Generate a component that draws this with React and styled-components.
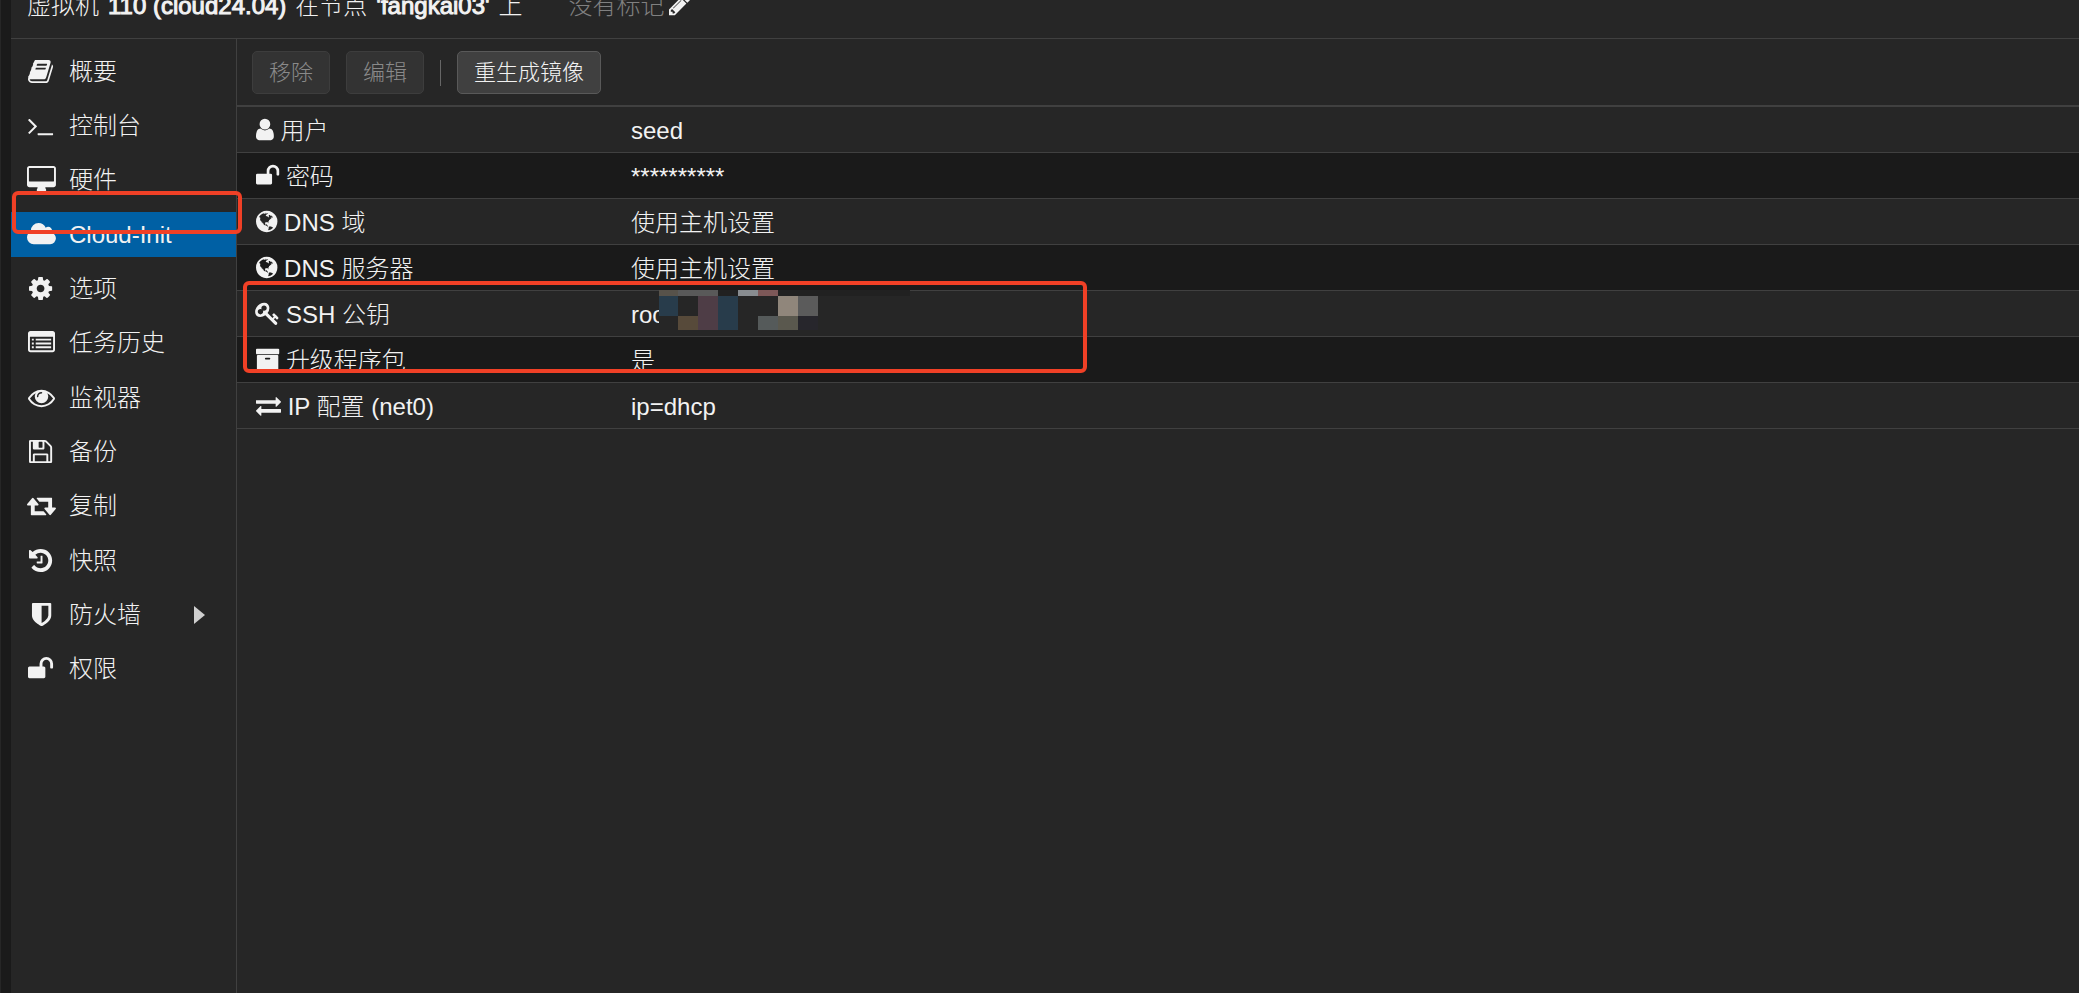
import React from 'react';
import styled, { createGlobalStyle } from 'styled-components';

const GlobalStyle = createGlobalStyle`
  * {
    box-sizing: border-box;
  }

  html,
  body,
  #root {
    height: 100%;
    margin: 0;
  }

  body {
    overflow: hidden;
    background-color: #262626;
    color: #f2f2f2;
    font-family: 'Liberation Sans', 'Noto Sans CJK SC', sans-serif;
    font-size: 24px;
    font-weight: 300;
    line-height: 36px;
  }
`;

// [left edge, advance width, path] on a 1792 unit em
const GLYPHS = {
  book: [64, 1664, 'M1703 478q40 57 18 129l-275 906q-19 64-76.5 107.5t-122.5 43.5h-923q-77 0-148.5-53.5t-99.5-131.5q-24-67-2-127 0-4 3-27t4-37q1-8-3-21.5t-3-19.5q2-11 8-21t16.5-23.5 16.5-23.5q23-38 45-91.5t30-91.5q3-10 .5-30t-.5-28q3-11 17-28t17-23q21-36 42-92t25-90q1-9-2.5-32t.5-28q4-13 22-30.5t22-22.5q19-26 42.5-84.5t27.5-96.5q1-8-3-25.5t-2-26.5q2-8 9-18t18-23 17-21q8-12 16.5-30.5t15-35 16-36 19.5-32 26.5-23.5 36-11.5 47.5 5.5l-1 3q38-9 51-9h761q74 0 114 56t18 130l-274 906q-36 119-71.5 153.5t-128.5 34.5h-869q-27 0-38 15-11 16-1 43 24 70 144 70h923q29 0 56-15.5t35-41.5l300-987q7-22 5-57 38 15 59 43zm-1064 2q-4 13 2 22.5t20 9.5h608q13 0 25.5-9.5t16.5-22.5l21-64q4-13-2-22.5t-20-9.5h-608q-13 0-25.5 9.5t-16.5 22.5zm-83 256q-4 13 2 22.5t20 9.5h608q13 0 25.5-9.5t16.5-22.5l21-64q4-13-2-22.5t-20-9.5h-608q-13 0-25.5 9.5t-16.5 22.5z'],
  terminal: [64, 1664, 'M649 983l-466 466q-10 10-23 10t-23-10l-50-50q-10-10-10-23t10-23l393-393-393-393q-10-10-10-23t10-23l50-50q10-10 23-10t23 10l466 466q10 10 10 23t-10 23zm1079 457v64q0 14-9 23t-23 9h-960q-14 0-23-9t-9-23v-64q0-14 9-23t23-9h960q14 0 23 9t9 23z'],
  desktop: [-64, 1920, 'M1728 992v-832q0-13-9.5-22.5t-22.5-9.5h-1600q-13 0-22.5 9.5t-9.5 22.5v832q0 13 9.5 22.5t22.5 9.5h1600q13 0 22.5-9.5t9.5-22.5zm128-832v1088q0 66-47 113t-113 47h-544q0 37 16 77.5t32 71 16 43.5q0 26-19 45t-45 19h-512q-26 0-45-19t-19-45q0-14 16-44t32-70 16-78h-544q-66 0-113-47t-47-113v-1088q0-66 47-113t113-47h1600q66 0 113 47t47 113z'],
  cloud: [64, 1920, 'M1984 1152q0 159-112.5 271.5t-271.5 112.5h-1088q-185 0-316.5-131.5t-131.5-316.5q0-132 71-241.5t187-163.5q-2-28-2-43 0-212 150-362t362-150q158 0 286.5 88t187.5 230q70-62 166-62 106 0 181 75t75 181q0 75-41 138 129 30 213 134.5t84 239.5z'],
  cog: [128, 1536, 'M1152 896q0-106-75-181t-181-75-181 75-75 181 75 181 181 75 181-75 75-181zm512-109v222q0 12-8 23t-20 13l-185 28q-19 54-39 91 35 50 107 138 10 12 10 25t-9 23q-27 37-99 108t-94 71q-12 0-26-9l-138-108q-44 23-91 38-16 136-29 186-7 28-36 28h-222q-14 0-24.5-8.5t-11.5-21.5l-28-184q-49-16-90-37l-141 107q-10 9-25 9-14 0-25-11-126-114-165-168-7-10-7-23 0-12 8-23 15-21 51-66.5t54-70.5q-27-50-41-99l-183-27q-13-2-21-12.5t-8-23.5v-222q0-12 8-23t19-13l186-28q14-46 39-92-40-57-107-138-10-12-10-24 0-10 9-23 26-36 98.5-107.5t94.5-71.5q13 0 26 10l138 107q44-23 91-38 16-136 29-186 7-28 36-28h222q14 0 24.5 8.5t11.5 21.5l28 184q49 16 90 37l142-107q9-9 24-9 13 0 25 10 129 119 165 170 7 8 7 22 0 12-8 23-15 21-51 66.5t-54 70.5q26 50 41 98l183 28q13 2 21 12.5t8 23.5z'],
  list: [0, 1792, 'M256 1152h128v128h-128zm0-256h128v128h-128zm0-256h128v128h-128zm256 512h1024v128h-1024zm0-256h1024v128h-1024zm0-256h1024v128h-1024zM1664 1376v-832q0-13-9.5-22.5t-22.5-9.5h-1472q-13 0-22.5 9.5t-9.5 22.5v832q0 13 9.5 22.5t22.5 9.5h1472q13 0 22.5-9.5t9.5-22.5zm128-1088v1088q0 66-47 113t-113 47h-1472q-66 0-113-47t-47-113v-1088q0-66 47-113t113-47h1472q66 0 113 47t47 113z'],
  eye: [0, 1792, 'M1664 960q-152-236-381-353 61 104 61 225 0 185-131.5 316.5t-316.5 131.5-316.5-131.5-131.5-316.5q0-121 61-225-229 117-381 353 133 205 333.5 326.5t434.5 121.5 434.5-121.5 333.5-326.5zm-720-384q0-20-14-34t-34-14q-125 0-214.5 89.5t-89.5 214.5q0 20 14 34t34 14 34-14 14-34q0-86 61-147t147-61q20 0 34-14t14-34zm848 384q0 34-20 69-140 230-376.5 368.5t-499.5 138.5-499.5-139-376.5-368q-20-35-20-69t20-69q140-229 376.5-368t499.5-139 499.5 139 376.5 368q20 35 20 69z'],
  floppy: [128, 1536, 'M512 1536h768v-384h-768v384zm896 0h128v-896q0-14-10-38.5t-20-34.5l-281-281q-10-10-34-20t-39-10v416q0 40-28 68t-68 28h-576q-40 0-68-28t-28-68v-416h-128v1280h128v-416q0-40 28-68t68-28h832q40 0 68 28t28 68v416zm-384-928v-320q0-13-9.5-22.5t-22.5-9.5h-192q-13 0-22.5 9.5t-9.5 22.5v320q0 13 9.5 22.5t22.5 9.5h192q13 0 22.5-9.5t9.5-22.5zm640 32v928q0 40-28 68t-68 28h-1344q-40 0-68-28t-28-68v-1344q0-40 28-68t68-28h928q40 0 88 20t76 48l280 280q28 28 48 76t20 88z'],
  retweet: [0, 1920, 'M1280 1504q0 13-9.5 22.5t-22.5 9.5h-960q-8 0-13.5-2t-9-7-5.5-8-3-11.5-1-11.5v-600h-192q-26 0-45-19t-19-45q0-24 15-41l320-384q19-22 49-22t49 22l320 384q15 17 15 41 0 26-19 45t-45 19h-192v384h576q16 0 25 11l160 192q7 10 7 21zm640-416q0 24-15 41l-320 384q-20 23-49 23t-49-23l-320-384q-15-17-15-41 0-26 19-45t45-19h192v-384h-576q-16 0-25-12l-160-192q-7-9-7-20 0-13 9.5-22.5t22.5-9.5h960q8 0 13.5 2t9 7 5.5 8 3 11.5 1 11.5v600h192q26 0 45 19t19 45z'],
  history: [128, 1536, 'M1664 896q0 156-61 298t-164 245-245 164-298 61q-172 0-327-72.5t-264-204.5q-7-10-6.5-22.5t8.5-20.5l137-138q10-9 25-9 16 2 23 12 73 95 179 147t225 52q104 0 198.5-40.5t163.5-109.5 109.5-163.5 40.5-198.5-40.5-198.5-109.5-163.5-163.5-109.5-198.5-40.5q-98 0-188 35.5t-160 101.5l137 138q31 30 14 69-17 40-59 40h-448q-26 0-45-19t-19-45v-448q0-42 40-59 39-17 69 14l130 129q107-101 244.5-156.5t284.5-55.5q156 0 298 61t245 164 164 245 61 298zm-640-288v448q0 14-9 23t-23 9h-320q-14 0-23-9t-9-23v-64q0-14 9-23t23-9h224v-352q0-14 9-23t23-9h64q14 0 23 9t9 23z'],
  shield: [256, 1280, 'M1408 960v-640h-448v1137q119-63 213-137 235-184 235-360zm192-768v768q0 86-33.5 170.5t-83 150-118 127.5-126.5 103-121 77.5-89.5 49.5-42.5 20q-12 6-26 6t-26-6q-16-7-42.5-20t-89.5-49.5-121-77.5-126.5-103-118-127.5-83-150-33.5-170.5v-768q0-26 19-45t45-19h1152q26 0 45 19t19 45z'],
  unlock: [64, 1664, 'M1728 576v256q0 26-19 45t-45 19h-64q-26 0-45-19t-19-45v-256q0-106-75-181t-181-75-181 75-75 181v192h96q40 0 68 28t28 68v576q0 40-28 68t-68 28h-960q-40 0-68-28t-28-68v-576q0-40 28-68t68-28h672v-192q0-185 131.5-316.5t316.5-131.5 316.5 131.5 131.5 316.5z'],
  user: [256, 1280, 'M1536 1399q0 109-62.5 187t-150.5 78h-854q-88 0-150.5-78t-62.5-187q0-85 8.5-160.5t31.5-152 58.5-131 94-89 134.5-34.5q131 128 313 128t313-128q76 0 134.5 34.5t94 89 58.5 131 31.5 152 8.5 160.5zm-256-887q0 159-112.5 271.5t-271.5 112.5-271.5-112.5-112.5-271.5 112.5-271.5 271.5-112.5 271.5 112.5 112.5 271.5z'],
  globe: [128, 1536, 'M896 128q209 0 385.5 103t279.5 279.5 103 385.5-103 385.5-279.5 279.5-385.5 103-385.5-103-279.5-279.5-103-385.5 103-385.5 279.5-279.5 385.5-103zm274 521q-2 1-9.5 9.5t-13.5 9.5q2 0 4.5-5t5-11 3.5-7q6-7 22-15 14-6 52-12 34-8 51 11-2-2 9.5-13t14.5-12q3-2 15-4.5t15-7.5l2-22q-12 1-17.5-7t-6.5-21q0 2-6 8 0-7-4.5-8t-11.5 1-9 1q-10-3-15-7.5t-8-16.5-4-15q-2-5-9.5-11t-9.5-10q-1-2-2.5-5.5t-3-6.5-4-5.5-5.5-2.5-7 5-7.5 10-4.5 5q-3-2-6-1.5t-4.5 1-4.5 3-5 3.5q-3 2-8.5 3t-8.5 2q15-5-1-11-10-4-16-3 9-4 7.5-12t-8.5-14h5q-1-4-8.5-8.5t-17.5-8.5-13-6q-8-5-34-9.5t-33-.5q-5 6-4.5 10.5t4 14 3.5 12.5q1 6-5.5 13t-6.5 12q0 7 14 15.5t10 21.5q-3 8-16 16t-16 12q-5 8-1.5 18.5t10.5 16.5q2 2 1.5 4t-3.5 4.5-5.5 4-6.5 3.5l-3 2q-11 5-20.5-6t-13.5-26q-7-25-16-30-23-8-29 1-5-13-41-26-25-9-58-4 6-1 0-15-7-15-19-12 3-6 4-17.5t1-13.5q3-13 12-23 1-1 7-8.5t9.5-13.5.5-6q35 4 50-11 5-5 11.5-17t10.5-17q9-6 14-5.5t14.5 5.5 14.5 5q14 1 15.5-11t-7.5-20q12 1 3-17-4-7-8-9-12-4-27 5-8 4 2 8-1-1-9.5 10.5t-16.5 17.5-16-5q-1-1-5.5-13.5t-9.5-13.5q-8 0-16 15 3-8-11-15t-24-8q19-12-8-27-7-4-20.5-5t-19.5 4q-5 7-5.5 11.5t5 8 10.5 5.5 11.5 4 8.5 3q14 10 8 14-2 1-8.5 3.5t-11.5 4.5-6 4q-3 4 0 14t-2 14q-5-5-9-17.5t-7-16.5q7 9-25 6l-10-1q-4 0-16 2t-20.5 1-13.5-8q-4-8 0-20 1-4 4-2-4-3-11-9.5t-10-8.5q-46 15-94 41 6 1 12-1 5-2 13-6.5t10-5.5q34-14 42-7l5-5q14 16 20 25-7-4-30-1-20 6-22 12 7 12 5 18-4-3-11.5-10t-14.5-11-15-5q-16 0-22 1-146 80-235 222 7 7 12 8 4 1 5 9t2.5 11 11.5-3q9 8 3 19 1-1 44 27 19 17 21 21 3 11-10 18-1-2-9-9t-9-4q-3 5 .5 18.5t10.5 12.5q-7 0-9.5 16t-2.5 35.5-1 23.5l2 1q-3 12 5.5 34.5t21.5 19.5q-13 3 20 43 6 8 8 9 3 2 12 7.5t15 10 10 10.5q4 5 10 22.5t14 23.5q-2 6 9.5 20t10.5 23q-1 0-2.5 1t-2.5 1q3 7 15.5 14t15.5 13q1 3 2 10t3 11 8 2q2-20-24-62-15-25-17-29-3-5-5.5-15.5t-4.5-14.5q2 0 6 1.5t8.5 3.5 7.5 4 2 3q-3 7 2 17.5t12 18.5 17 19 12 13q6 6 14 19.5t0 13.5q9 0 20 10.5t17 19.5q5 8 8 26t5 24q2 7 8.5 13.5t12.5 9.5l16 8 13 7q5 2 18.5 10.5t21.5 11.5q10 4 16 4t14.5-2.5 13.5-3.5q15-2 29 15t21 21q36 19 55 11-2 1 .5 7.5t8 15.5 9 14.5 5.5 8.5q5 6 18 15t18 15q6-4 7-9-3 8 7 20t18 10q14-3 14-32-31 15-49-18 0-1-2.5-5.5t-4-8.5-2.5-8.5 0-7.5 5-3q9 0 10-3.5t-2-12.5-4-13q-1-8-11-20t-12-15q-5 9-16 8t-16-9q0 1-1.5 5.5t-1.5 6.5q-13 0-15-1 1-3 2.5-17.5t3.5-22.5q1-4 5.5-12t7.5-14.5 4-12.5-4.5-9.5-17.5-2.5q-19 1-26 20-1 3-3 10.5t-5 11.5-9 7q-7 3-24 2t-24-5q-13-8-22.5-29t-9.5-37q0-10 2.5-26.5t3-25-5.5-24.5q3-2 9-9.5t10-10.5q2-1 4.5-1.5t4.5 0 4-1.5 3-6q-1-1-4-3-3-3-4-3 7 3 28.5-1.5t27.5 1.5q15 11 22-2 0-1-2.5-9.5t-.5-13.5q5 27 29 9 3 3 15.5 5t17.5 5q3 2 7 5.5t5.5 4.5 5-.5 8.5-6.5q10 14 12 24 11 40 19 44 7 3 11 2t4.5-9.5 0-14-1.5-12.5l-1-8v-18l-1-8q-15-3-18.5-12t1.5-18.5 15-18.5q1-1 8-3.5t15.5-6.5 12.5-8q21-19 15-35 7 0 11-9-1 0-5-3t-7.5-5-4.5-2q9-5 2-16 5-3 7.5-11t7.5-10q9 12 21 2 7-8 1-16 5-7 20.5-10.5t18.5-9.5q7 2 8-2t1-12 3-12q4-5 15-9t13-5l17-11q3-4 0-4 18 2 31-11 10-11-6-20 3-6-3-9.5t-15-5.5q3-1 11.5-.5t10.5-1.5q15-10-7-16-17-5-43 12zm-163 877q206-36 351-189-3-3-12.5-4.5t-12.5-3.5q-18-7-24-8 1-7-2.5-13t-8-9-12.5-8-11-7q-2-2-7-6t-7-5.5-7.5-4.5-8.5-2-10 1l-3 1q-3 1-5.5 2.5t-5.5 3-4 3 0 2.5q-21-17-36-22-5-1-11-5.5t-10.5-7-10-1.5-11.5 7q-5 5-6 15t-2 13q-7-5 0-17.5t2-18.5q-3-6-10.5-4.5t-12 4.5-11.5 8.5-9 6.5-8.5 5.5-8.5 7.5q-3 4-6 12t-5 11q-2-4-11.5-6.5t-9.5-5.5q2 10 4 35t5 38q7 31-12 48-27 25-29 40-4 22 12 26 0 7-8 20.5t-7 21.5q0 6 2 16z'],
  key: [64, 1664, 'M832 512q0-80-56-136t-136-56-136 56-56 136q0 42 19 83-41-19-83-19-80 0-136 56t-56 136 56 136 136 56 136-56 56-136q0-42-19-83 41 19 83 19 80 0 136-56t56-136zm851 704q0 17-49 66t-66 49q-9 0-28.5-16t-36.5-33-38.5-40-24.5-26l-96 96 220 220q28 28 28 68 0 42-39 81t-81 39q-40 0-68-28l-671-671q-176 131-365 131-163 0-265.5-102.5t-102.5-265.5q0-160 95-313t248-248 313-95q163 0 265.5 102.5t102.5 265.5q0 189-131 365l355 355 96-96q-3-3-26-24.5t-40-38.5-33-36.5-16-28.5q0-17 49-66t66-49q13 0 23 10 6 6 46 44.5t82 79.5 86.5 86 73 78 28.5 41z'],
  archive: [64, 1664, 'M1088 832q0-26-19-45t-45-19h-256q-26 0-45 19t-19 45 19 45 45 19h256q26 0 45-19t19-45zm576-192v960q0 26-19 45t-45 19h-1408q-26 0-45-19t-19-45v-960q0-26 19-45t45-19h1408q26 0 45 19t19 45zm64-448v256q0 26-19 45t-45 19h-1536q-26 0-45-19t-19-45v-256q0-26 19-45t45-19h1536q26 0 45 19t19 45z'],
  exchange: [0, 1792, 'M1792 1184v192q0 13-9.5 22.5t-22.5 9.5h-1376v192q0 13-9.5 22.5t-22.5 9.5q-12 0-24-10l-319-320q-9-9-9-22 0-14 9-23l320-320q9-9 23-9 13 0 22.5 9.5t9.5 22.5v192h1376q13 0 22.5 9.5t9.5 22.5zm0-544q0 14-9 23l-320 320q-9 9-23 9-13 0-22.5-9.5t-9.5-22.5v-192h-1376q-13 0-22.5-9.5t-9.5-22.5v-192q0-13 9.5-22.5t22.5-9.5h1376v-192q0-14 9-23t23-9q12 0 24 10l319 319q9 9 9 23z'],
  pencil: [128, 1536, 'M491 1536l91-91-235-235-91 91v107h128v128h107zm523-928q0-22-22-22-10 0-17 7l-542 542q-7 7-7 17 0 22 22 22 10 0 17-7l542-542q7-7 7-17zm-54-192l416 416-832 832h-416v-416zm683 96q0 53-37 90l-166 166-416-416 166-165q36-38 90-38 53 0 91 38l235 234q37 39 37 91z']
};

const Svg = styled.svg`
  width: auto;
  height: ${props => props.$size}px;
  fill: currentColor;
  overflow: visible;
  vertical-align: -3px;
`;

const Icon = ({ name, size = 25 }) => {
  const [left, width, path] = GLYPHS[name];
  return (
    <Svg $size={size} viewBox={`${left} 0 ${width} 1792`} aria-hidden="true">
      <path d={path} />
    </Svg>
  );
};

const Page = styled.div`
  position: relative;
  display: flex;
  height: 100%;
`;

const Splitter = styled.div`
  flex: none;
  width: 11px;
  background-color: #1a1a1a;
  border-left: 1px solid #262626;
`;

const Main = styled.div`
  flex: 1;
  min-width: 0;
  display: flex;
  flex-direction: column;
`;

const Header = styled.header`
  flex: none;
  display: flex;
  align-items: flex-end;
  gap: 46px;
  height: 39px;
  padding: 0 16px 14px;
  border-bottom: 1px solid #404040;
`;

const Title = styled.h1`
  display: flex;
  gap: 9px;
  margin: 0;
  font-size: 24px;
  font-weight: inherit;
`;

const GuestName = styled.span`
  -webkit-text-stroke: 1px currentColor;
`;

const Tags = styled.div`
  color: #808080;
`;

const EditTags = styled.button`
  margin-left: 4px;
  padding: 0;
  border: 0;
  background: none;
  color: #f2f2f2;
  font: inherit;
`;

const Body = styled.div`
  flex: 1;
  min-height: 0;
  display: flex;
`;

const Nav = styled.nav`
  flex: none;
  width: 226px;
  padding-top: 10px;
  border-right: 1px solid #404040;
`;

const NavItem = styled.a`
  display: flex;
  align-items: center;
  height: 45px;
  margin-bottom: 9px;
  padding-left: 14px;
  color: #f2f2f2;
  background-color: ${props => (props.$active ? '#0060a4' : 'transparent')};
  text-decoration: none;

  &:nth-child(3n) {
    margin-bottom: 10px;
  }
`;

const NavIcon = styled.span`
  display: flex;
  justify-content: center;
  width: 32px;
  margin-right: 12px;
`;

const Expander = styled.span`
  margin-left: auto;
  margin-right: 31px;
  border-style: solid;
  border-width: 9px 0 9px 11px;
  border-color: transparent transparent transparent #cfcfcf;
`;

const Content = styled.main`
  flex: 1;
  min-width: 0;
`;

const Toolbar = styled.div`
  display: flex;
  align-items: center;
  gap: 16px;
  padding: 12px 15px 11px;
  border-bottom: 2px solid #404040;
`;

const Button = styled.button`
  height: 43px;
  padding: 0 16px;
  border: 1px solid #595959;
  border-radius: 5px;
  background-color: #404040;
  color: #f2f2f2;
  font-family: inherit;
  font-size: 22px;
  font-weight: inherit;
  line-height: 32px;

  &:disabled {
    border-color: #3d3d3d;
    background-color: #333333;
    color: #8a8a8a;
  }
`;

const Separator = styled.div`
  width: 1px;
  height: 26px;
  background-color: #666666;
`;

const Table = styled.table`
  width: 100%;
  border-spacing: 0;
  table-layout: fixed;
`;

const Row = styled.tr`
  height: 46px;

  &:nth-child(even) {
    background-color: #1a1a1a;
  }

  th,
  td {
    padding: 2px 19px 0;
    border-bottom: 1px solid #404040;
  }
`;

const Name = styled.th`
  width: 375px;
  font-weight: inherit;
  text-align: left;
  white-space: nowrap;
`;

const Value = styled.td`
  position: relative;
`;

const Mosaic = styled.svg`
  position: absolute;
  top: -1px;
  left: 47px;
`;

const Highlight = styled.div`
  position: absolute;
  top: ${props => props.$top}px;
  left: ${props => props.$left}px;
  width: ${props => props.$width}px;
  height: ${props => props.$height}px;
  border: 4px solid #f04026;
  border-radius: 6px;
  pointer-events: none;
`;

const NAV_ITEMS = [
  { icon: 'book', label: '概要' },
  { icon: 'terminal', label: '控制台' },
  { icon: 'desktop', label: '硬件' },
  { icon: 'cloud', label: 'Cloud-Init', active: true },
  { icon: 'cog', label: '选项' },
  { icon: 'list', label: '任务历史' },
  { icon: 'eye', label: '监视器' },
  { icon: 'floppy', label: '备份' },
  { icon: 'retweet', label: '复制' },
  { icon: 'history', label: '快照' },
  { icon: 'shield', label: '防火墙', expandable: true },
  { icon: 'unlock', label: '权限' }
];

const SETTINGS = [
  { icon: 'user', label: '用户', value: 'seed' },
  { icon: 'unlock', label: '密码', value: '**********' },
  { icon: 'globe', label: 'DNS 域', value: '使用主机设置' },
  { icon: 'globe', label: 'DNS 服务器', value: '使用主机设置' },
  { icon: 'key', label: 'SSH 公钥', value: 'roo', masked: true },
  { icon: 'archive', label: '升级程序包', value: '是' },
  { icon: 'exchange', label: 'IP 配置 (net0)', value: 'ip=dhcp' }
];

// x, y, width, height, colour
const MOSAIC_BLOCKS = [
  [0, 0, 251, 6, '#212121'],
  [0, 6, 159, 34, '#262626'],
  [0, 0, 19, 6, '#57524a'],
  [19, 0, 40, 6, '#595959'],
  [79, 0, 20, 6, '#888c90'],
  [99, 0, 20, 6, '#7d5858'],
  [0, 6, 19, 20, '#283c4b'],
  [39, 6, 20, 34, '#4e3d46'],
  [59, 6, 20, 34, '#283c4b'],
  [119, 6, 20, 20, '#90867b'],
  [139, 6, 20, 20, '#5b5b5b'],
  [19, 26, 20, 14, '#574a3a'],
  [99, 26, 20, 14, '#555a5a'],
  [119, 26, 20, 14, '#5a584e'],
  [139, 26, 20, 14, '#27262c']
];

const renderMosaic = () => (
  <Mosaic width="251" height="40" shapeRendering="crispEdges" aria-hidden="true">
    {MOSAIC_BLOCKS.map(([x, y, width, height, fill]) => (
      <rect key={`${x}-${y}-${width}`} x={x} y={y} width={width} height={height} fill={fill} />
    ))}
  </Mosaic>
);

const App = () => (
  <Page>
    <GlobalStyle />
    <Splitter />
    <Main>
      <Header>
        <Title>
          <span>虚拟机</span>
          <GuestName>110 (cloud24.04)</GuestName>
          <span>在节点</span>
          <GuestName>&apos;fangkai03&apos;</GuestName>
          <span>上</span>
        </Title>
        <Tags>
          没有标记
          <EditTags aria-label="编辑标记"><Icon name="pencil" /></EditTags>
        </Tags>
      </Header>
      <Body>
        <Nav>
          {NAV_ITEMS.map(({ icon, label, active, expandable }) => (
            <NavItem key={label} href="#" $active={active}>
              <NavIcon><Icon name={icon} size={27} /></NavIcon>
              {label}
              {expandable && <Expander />}
            </NavItem>
          ))}
        </Nav>
        <Content>
          <Toolbar>
            <Button disabled>移除</Button>
            <Button disabled>编辑</Button>
            <Separator />
            <Button>重生成镜像</Button>
          </Toolbar>
          <Table>
            <tbody>
              {SETTINGS.map(({ icon, label, value, masked }) => (
                <Row key={label}>
                  <Name scope="row"><Icon name={icon} /> {label}</Name>
                  <Value>
                    {value}
                    {masked && renderMosaic()}
                  </Value>
                </Row>
              ))}
            </tbody>
          </Table>
        </Content>
      </Body>
    </Main>
    <Highlight $top={191} $left={12} $width={230} $height={43} />
    <Highlight $top={281} $left={243} $width={844} $height={92} />
  </Page>
);

export default App;
